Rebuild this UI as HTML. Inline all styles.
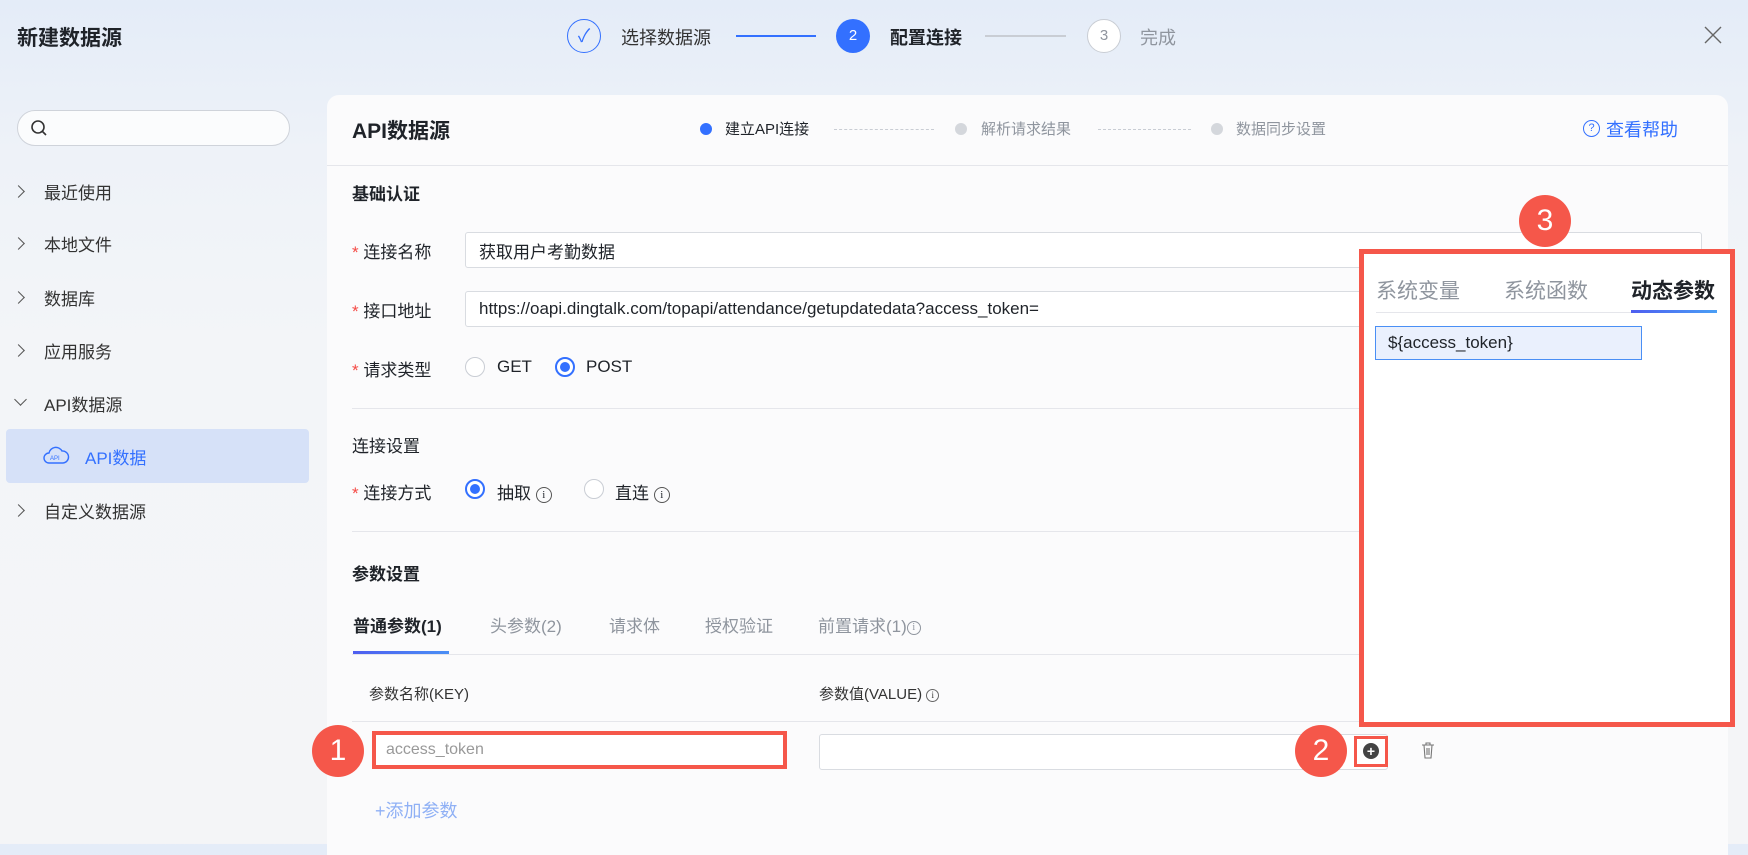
<!DOCTYPE html>
<html><head><meta charset="utf-8"><style>
*{margin:0;padding:0;box-sizing:border-box}
body{width:1748px;height:844px;overflow:hidden;position:relative;font-family:"Liberation Sans","Noto Sans CJK SC",sans-serif;color:#1f2329;background:linear-gradient(180deg,#e4ecf8 0%,#eef2f8 18%,#f3f5f8 40%,#f4f5f7 100%)}
.a{position:absolute;white-space:nowrap}
.t16{font-size:17px}
.g{color:#8f959e}
.line{position:absolute;height:1px;background:#e5e6eb}
.inp{position:absolute;border:1px solid #d9dce1;border-radius:3px;background:#fff;font-size:17px;padding-left:13px;display:flex;align-items:center;color:#1f2329}
.radio{position:absolute;width:20px;height:20px;border-radius:50%;border:1px solid #c9cdd4;background:#fff}
.radio.on{border:2px solid #3370ff}
.radio.on:after{content:"";position:absolute;left:3px;top:3px;width:10px;height:10px;border-radius:50%;background:#3370ff}
.star{color:#f54a45}
.badge{position:absolute;width:52px;height:52px;border-radius:50%;background:#f5574a;color:#fff;font-size:30px;display:flex;align-items:center;justify-content:center;font-family:"Liberation Sans",sans-serif}
.chev{position:absolute;width:9px;height:9px;border-right:1.6px solid #555;border-top:1.6px solid #555;transform:rotate(45deg)}
.info{display:inline-block;width:16px;height:16px;border:1.3px solid #555;border-radius:50%;font-size:11px;text-align:center;line-height:14px;vertical-align:middle;font-family:"Liberation Serif",serif}
</style></head><body>
<div class="a" style="left:17px;top:22px;font-size:21px;font-weight:bold">新建数据源</div>
<div class="a" style="left:567px;top:19px;width:34px;height:34px;border:1.5px solid #3370ff;border-radius:50%;color:#3370ff;text-align:center;line-height:32px;font-size:18px">✓</div>
<div class="a" style="left:621px;top:24px;font-size:18px;color:#333">选择数据源</div>
<div class="a" style="left:736px;top:35px;width:80px;height:2px;background:#3370ff"></div>
<div class="a" style="left:836px;top:19px;width:34px;height:34px;background:#3370ff;border-radius:50%;color:#fff;text-align:center;line-height:34px;font-size:15px">2</div>
<div class="a" style="left:890px;top:24px;font-size:18px;font-weight:bold;color:#1f2329">配置连接</div>
<div class="a" style="left:985px;top:35px;width:81px;height:2px;background:#c9cdd4"></div>
<div class="a" style="left:1087px;top:19px;width:34px;height:34px;border:1px solid #c9cdd4;border-radius:50%;background:#fff;color:#8f959e;text-align:center;line-height:32px;font-size:15px">3</div>
<div class="a" style="left:1140px;top:24px;font-size:18px;color:#8f959e">完成</div>
<svg class="a" style="left:1704px;top:26px" width="18" height="18" viewBox="0 0 18 18"><path d="M1 1l16 16M17 1L1 17" stroke="#666" stroke-width="1.4"/></svg>
<div class="a" style="left:17px;top:110px;width:273px;height:36px;border:1px solid #cfd3da;border-radius:18px;background:#fbfcfd"></div>
<svg class="a" style="left:30px;top:119px" width="18" height="18" viewBox="0 0 18 18"><circle cx="8" cy="8" r="6" fill="none" stroke="#333" stroke-width="1.6"/><path d="M12.5 12.5l3.5 3.5" stroke="#333" stroke-width="1.6"/></svg>
<div class="chev" style="left:14px;top:187px"></div><div class="a t16" style="left:44px;top:179px;color:#333">最近使用</div>
<div class="chev" style="left:14px;top:239px"></div><div class="a t16" style="left:44px;top:231px;color:#333">本地文件</div>
<div class="chev" style="left:14px;top:293px"></div><div class="a t16" style="left:44px;top:285px;color:#333">数据库</div>
<div class="chev" style="left:14px;top:346px"></div><div class="a t16" style="left:44px;top:338px;color:#333">应用服务</div>
<div class="chev" style="left:16px;top:395px;transform:rotate(135deg)"></div><div class="a t16" style="left:44px;top:391px;color:#333">API数据源</div>
<div class="a" style="left:6px;top:429px;width:303px;height:54px;background:#d6e1f8;border-radius:4px"></div>
<svg class="a" style="left:42px;top:444px" width="28" height="24" viewBox="0 0 28 24"><path d="M7 19a5 5 0 0 1 0-10 7 7 0 0 1 13-2 6 6 0 0 1 1 12z" fill="none" stroke="#3370ff" stroke-width="1.4"/><text x="8" y="16" font-size="6" fill="#3370ff" font-family="Liberation Sans">API</text></svg>
<div class="a t16" style="left:85px;top:444px;color:#3370ff">API数据</div>
<div class="chev" style="left:14px;top:506px"></div><div class="a t16" style="left:44px;top:498px;color:#333">自定义数据源</div>
<div class="a" style="left:327px;top:95px;width:1401px;height:760px;background:#fbfbfc;border-radius:12px 12px 0 0"></div>
<div class="line" style="left:327px;top:165px;width:1401px"></div>
<div class="a" style="left:352px;top:115px;font-size:21px;font-weight:bold">API数据源</div>
<div class="a" style="left:700px;top:123px;width:12px;height:12px;border-radius:50%;background:#3370ff"></div>
<div class="a" style="left:725px;top:118px;font-size:15px;color:#1f2329">建立API连接</div>
<div class="a" style="left:834px;top:129px;width:100px;border-top:1px dashed #c9cdd4"></div>
<div class="a" style="left:955px;top:123px;width:12px;height:12px;border-radius:50%;background:#d4d7dc"></div>
<div class="a" style="left:981px;top:118px;font-size:15px;color:#8f959e">解析请求结果</div>
<div class="a" style="left:1098px;top:129px;width:93px;border-top:1px dashed #c9cdd4"></div>
<div class="a" style="left:1211px;top:123px;width:12px;height:12px;border-radius:50%;background:#d4d7dc"></div>
<div class="a" style="left:1236px;top:118px;font-size:15px;color:#8f959e">数据同步设置</div>
<div class="a" style="left:1583px;top:120px;width:17px;height:17px;border:1.4px solid #3370ff;border-radius:50%;color:#3370ff;font-size:11px;text-align:center;line-height:15px">?</div>
<div class="a" style="left:1606px;top:116px;font-size:18px;color:#3370ff">查看帮助</div>
<div class="a" style="left:352px;top:180px;font-size:17px;font-weight:bold">基础认证</div>
<div class="a t16" style="left:352px;top:238px"><span class="star">*</span> 连接名称</div>
<div class="inp" style="left:465px;top:232px;width:1237px;height:36px">获取用户考勤数据</div>
<div class="a t16" style="left:352px;top:297px"><span class="star">*</span> 接口地址</div>
<div class="inp" style="left:465px;top:291px;width:1237px;height:36px">https://oapi.dingtalk.com/topapi/attendance/getupdatedata?access_token=</div>
<div class="a t16" style="left:352px;top:356px"><span class="star">*</span> 请求类型</div>
<div class="radio" style="left:465px;top:357px"></div><div class="a t16" style="left:497px;top:357px">GET</div>
<div class="radio on" style="left:555px;top:357px"></div><div class="a t16" style="left:586px;top:357px">POST</div>
<div class="line" style="left:352px;top:408px;width:1010px"></div>
<div class="a t16" style="left:352px;top:432px">连接设置</div>
<div class="a t16" style="left:352px;top:479px"><span class="star">*</span> 连接方式</div>
<div class="radio on" style="left:465px;top:479px"></div><div class="a t16" style="left:497px;top:479px">抽取 <span class="info">i</span></div>
<div class="radio" style="left:584px;top:479px"></div><div class="a t16" style="left:615px;top:479px">直连 <span class="info">i</span></div>
<div class="line" style="left:352px;top:531px;width:1010px"></div>
<div class="a" style="left:352px;top:560px;font-size:17px;font-weight:bold">参数设置</div>
<div class="a t16" style="left:353px;top:612px;font-weight:bold">普通参数(1)</div>
<div class="a t16 g" style="left:490px;top:612px">头参数(2)</div>
<div class="a t16 g" style="left:609px;top:612px">请求体</div>
<div class="a t16 g" style="left:705px;top:612px">授权验证</div>
<div class="a t16 g" style="left:818px;top:612px">前置请求(1)<span class="info" style="border-color:#8f959e;color:#8f959e;width:14px;height:14px;line-height:12px;font-size:10px">i</span></div>
<div class="line" style="left:352px;top:654px;width:1010px"></div>
<div class="a" style="left:353px;top:651px;width:96px;height:3px;background:linear-gradient(90deg,#4e5ef0,#4a8ff5)"></div>
<div class="a" style="left:369px;top:683px;font-size:15px;color:#333">参数名称(KEY)</div>
<div class="a" style="left:819px;top:683px;font-size:15px;color:#333">参数值(VALUE) <span class="info" style="width:13px;height:13px;line-height:11px;font-size:9px;border-color:#666">i</span></div>
<div class="line" style="left:352px;top:721px;width:1010px"></div>
<div class="a" style="left:372px;top:731px;width:415px;height:38px;border:4px solid #f5574a;background:#fff;font-size:16px;color:#999;padding-left:10px;line-height:30px">access_token</div>
<div class="inp" style="left:819px;top:734px;width:569px;height:36px"></div>
<div class="a" style="left:1354px;top:736px;width:34px;height:31px;border:3px solid #f5574a;background:#fff"></div>
<div class="a" style="left:1363px;top:743px;width:16px;height:16px;border-radius:50%;background:#444;color:#fff;font-size:14px;line-height:16px;text-align:center;font-weight:bold">+</div>
<svg class="a" style="left:1421px;top:742px" width="14" height="17" viewBox="0 0 14 17"><path d="M1 3h12M5 3V1h4v2M3 3l1 13h6l1-13M6 6v7M8 6v7" fill="none" stroke="#777" stroke-width="1.1"/></svg>
<div class="a" style="left:375px;top:797px;font-size:18px;color:#8fb0f5">+添加参数</div>
<div class="badge" style="left:312px;top:725px">1</div>
<div class="badge" style="left:1295px;top:725px">2</div>
<div class="a" style="left:1359px;top:249px;width:376px;height:478px;border:5px solid #f5574a;background:#fff"></div>
<div class="a" style="left:1376px;top:275px;font-size:21px;color:#8f959e">系统变量</div>
<div class="a" style="left:1504px;top:275px;font-size:21px;color:#8f959e">系统函数</div>
<div class="a" style="left:1631px;top:275px;font-size:21px;font-weight:bold;color:#1f2329">动态参数</div>
<div class="a" style="left:1376px;top:312px;width:341px;height:1px;background:#e5e6eb"></div>
<div class="a" style="left:1631px;top:310px;width:86px;height:3px;background:linear-gradient(90deg,#4e5ef0,#4a9ff5)"></div>
<div class="a" style="left:1375px;top:326px;width:267px;height:34px;border:1.5px solid #4a8ff5;background:#eaf0fd;font-size:17px;padding-left:12px;line-height:31px">${access_token}</div>
<div class="badge" style="left:1519px;top:195px">3</div>
</body></html>
